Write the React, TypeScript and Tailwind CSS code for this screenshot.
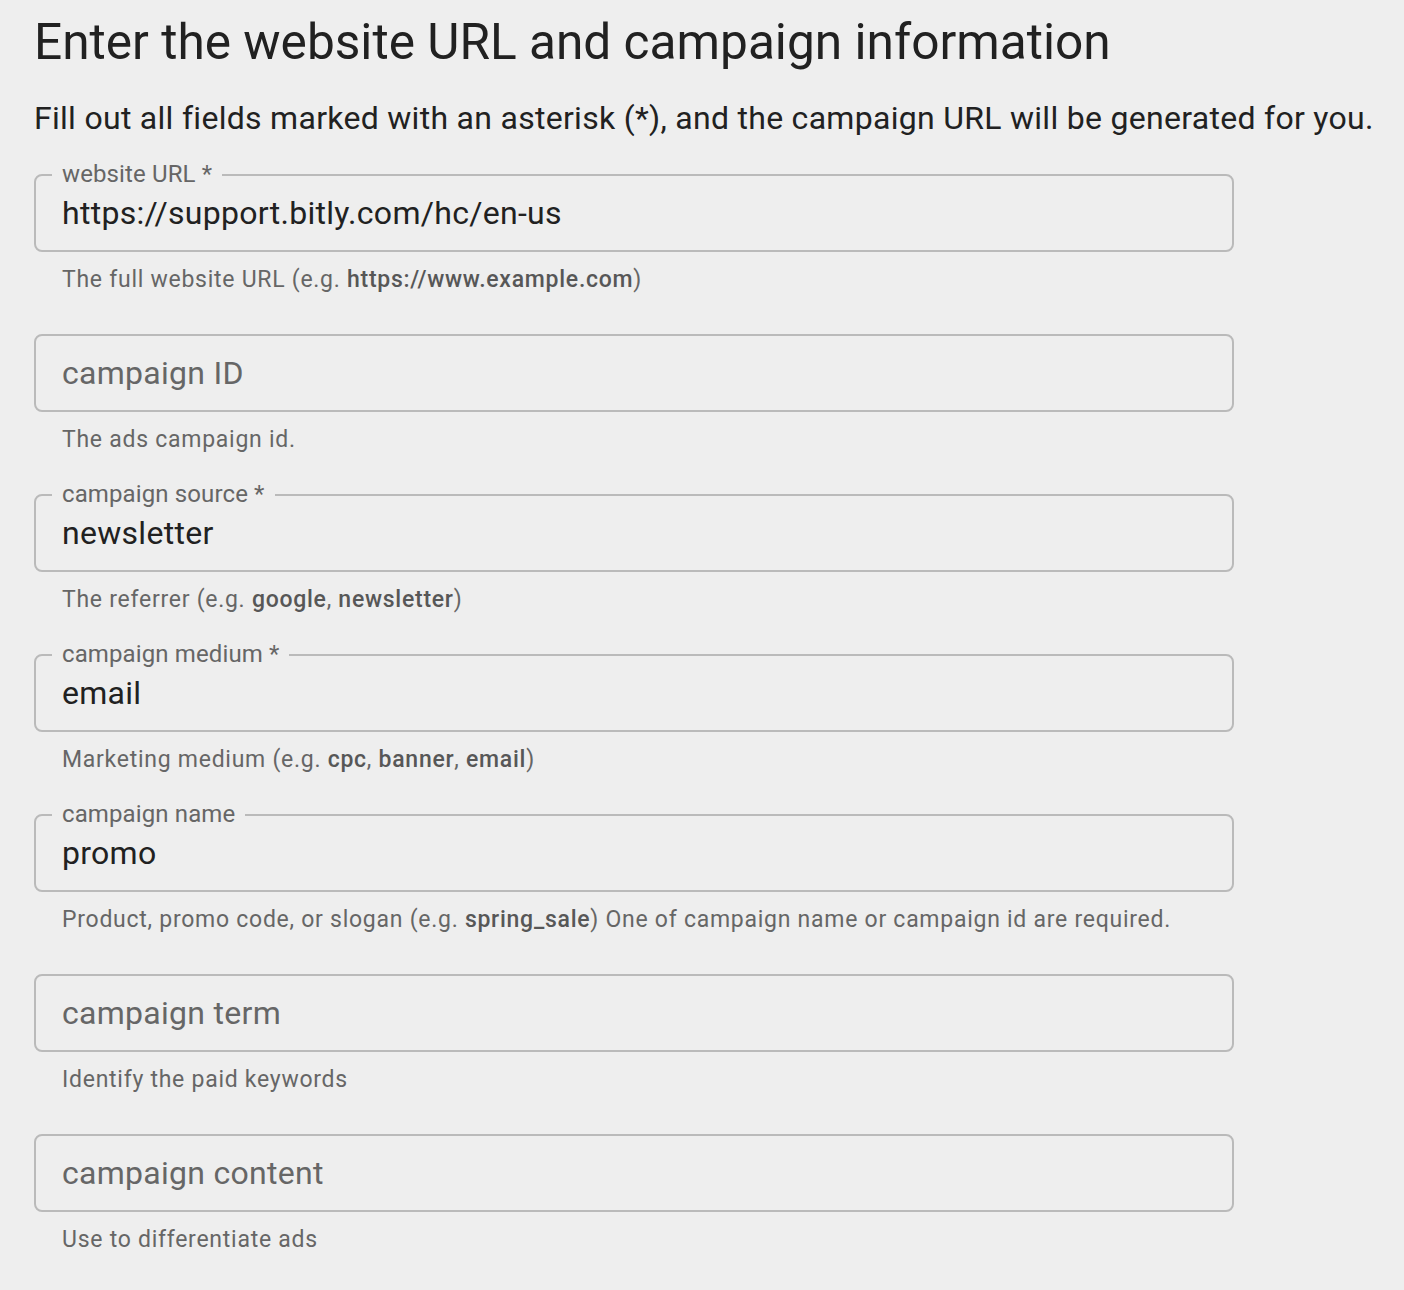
import React from 'react';

type Field = {
  label: string;
  value?: string;
  required?: boolean;
  helper: React.ReactNode;
};

const B = ({ children }: { children: React.ReactNode }) => (
  <span className="font-medium text-[#575757]">{children}</span>
);

const fields: Field[] = [
  {
    label: 'website URL',
    value: 'https://support.bitly.com/hc/en-us',
    required: true,
    helper: (
      <>
        The full website URL (e.g. <B>https://www.example.com</B>)
      </>
    ),
  },
  { label: 'campaign ID', helper: 'The ads campaign id.' },
  {
    label: 'campaign source',
    value: 'newsletter',
    required: true,
    helper: (
      <>
        The referrer (e.g. <B>google</B>, <B>newsletter</B>)
      </>
    ),
  },
  {
    label: 'campaign medium',
    value: 'email',
    required: true,
    helper: (
      <>
        Marketing medium (e.g. <B>cpc</B>, <B>banner</B>, <B>email</B>)
      </>
    ),
  },
  {
    label: 'campaign name',
    value: 'promo',
    helper: (
      <>
        Product, promo code, or slogan (e.g. <B>spring_sale</B>) One of campaign name or campaign id are required.
      </>
    ),
  },
  { label: 'campaign term', helper: 'Identify the paid keywords' },
  { label: 'campaign content', helper: 'Use to differentiate ads' },
];

const OutlinedField = ({ field }: { field: Field }) => {
  const filled = !!field.value;
  return (
    <div className="mb-[38px]">
      <div className="relative h-[78px] w-[1200px] rounded-[8px] border-2 border-[#bababa] flex items-center pl-[26px]">
        {filled && (
          <span className="absolute left-[16px] top-[-14px] bg-[#eeeeee] px-[10px] text-[24px] leading-[24px] tracking-[0.005em] text-[#666666]">
            {field.label}
            {field.required && ' *'}
          </span>
        )}
        {filled ? (
          <span className="text-[32px] leading-[40px] tracking-[0.009em] text-[#212121]">{field.value}</span>
        ) : (
          <span className="text-[32px] leading-[40px] tracking-[0.009em] text-[#666666]">{field.label}</span>
        )}
      </div>
      <p className="mt-[12px] pl-[28px] text-[23px] leading-[32px] tracking-[0.032em] text-[#666666]">
        {field.helper}
      </p>
    </div>
  );
};

export default function App() {
  return (
    <div
      className="min-h-[1290px] w-full bg-[#eeeeee] pl-[34px] pt-[6px]"
      style={{ fontFamily: 'Roboto, "Noto Sans", sans-serif' }}
    >
      <h1 className="text-[49.6px] leading-[72px] font-normal text-[#212121]">
        Enter the website URL and campaign information
      </h1>
      <p className="mt-[18px] text-[32px] leading-[44px] tracking-[0.009em] text-[#212121]">
        Fill out all fields marked with an asterisk (*), and the campaign URL will be generated for you.
      </p>
      <div className="mt-[34px]">
        {fields.map((f) => (
          <OutlinedField key={f.label} field={f} />
        ))}
      </div>
    </div>
  );
}
